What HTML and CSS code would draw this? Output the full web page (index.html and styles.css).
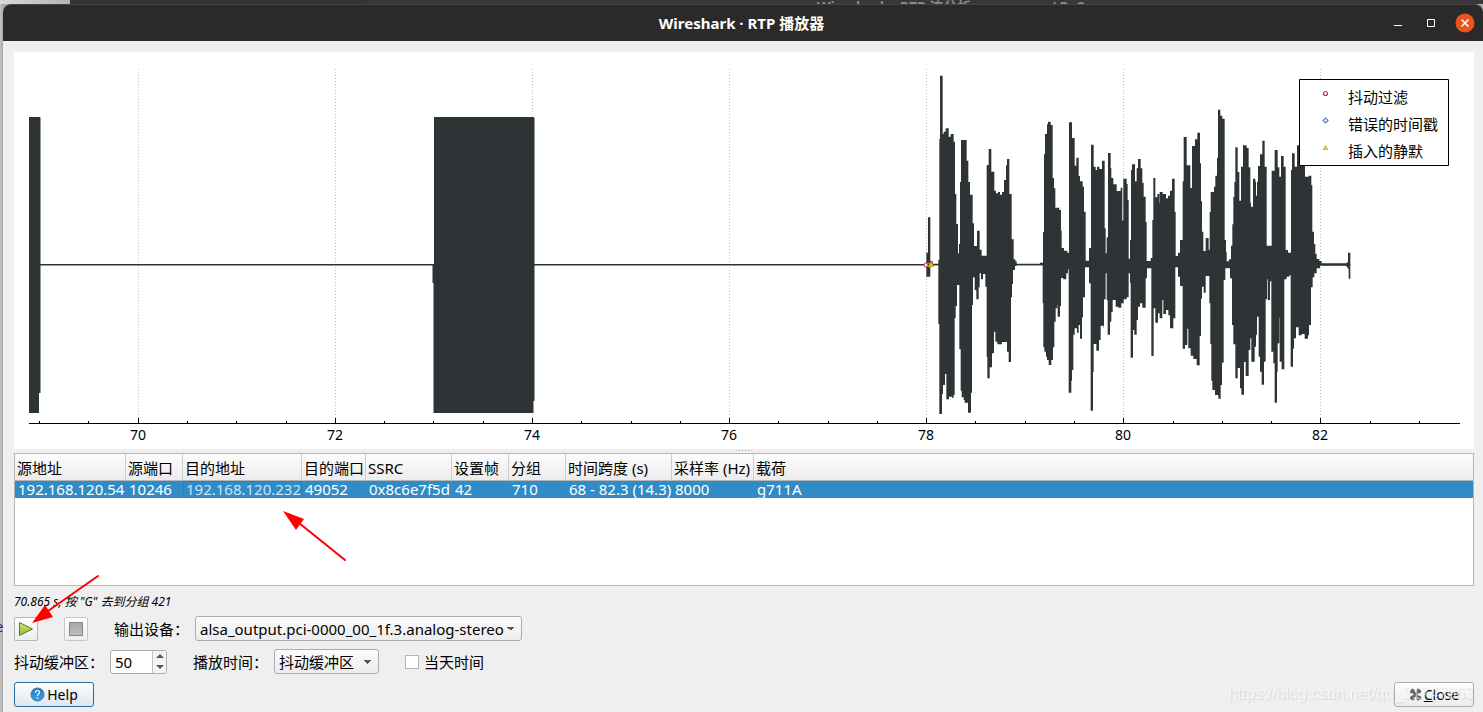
FILE: index.html
```html
<!DOCTYPE html>
<html lang="zh-CN">
<head>
<meta charset="utf-8">
<title>Wireshark · RTP 播放器</title>
<link rel="stylesheet" href="styles.css">
</head>
<body>
<div class="desktop">
  <div class="backdrop"><span class="backdrop-title">Wireshark · RTP 流分析 · ppp.pcap / Re2</span></div>
  <span class="backdrop-letter">e</span>
  <main class="window">
    <header class="titlebar">
      <h1 class="title">Wireshark · RTP 播放器</h1>
      <div class="window-buttons">
        <button class="window-button" aria-label="Minimize"><svg width="18" height="18" viewBox="0 0 18 18"><path d="M5 11.500h8" stroke="#fff"/></svg></button>
        <button class="window-button" aria-label="Maximize"><svg width="18" height="18" viewBox="0 0 18 18"><path d="M5.500 5.500h7v7h-7z" fill="none" stroke="#fff"/></svg></button>
        <button class="window-button" aria-label="Close window"><svg width="20" height="20" viewBox="0 0 20 20"><circle cx="10" cy="10" r="9.500" fill="#e95420"/><path d="M6.500 6.500l7 7m0-7l-7 7" stroke="#fff" stroke-width="1.500"/></svg></button>
      </div>
    </header>
    <div class="content">
      <svg class="plot" viewBox="14 52 1460 397" role="img" aria-label="RTP waveform">
        <g stroke="#c0c0c0" stroke-dasharray="1 2">
          <path d="M138.500 69V418M335.500 69V418M532.500 69V418M729.500 69V418M926.500 69V418M1123.500 69V418M1320.500 69V418"/>
        </g>
        <path d="M29 423.500H1460" stroke="#000"/>
        <path d="M138.500 418v5M335.500 418v5M532.500 418v5M729.500 418v5M926.500 418v5M1123.500 418v5M1320.500 418v5M39.500 421v2M88.500 421v2M187.500 421v2M236.500 421v2M286.500 421v2M384.500 421v2M433.500 421v2M483.500 421v2M581.500 421v2M631.500 421v2M680.500 421v2M778.500 421v2M828.500 421v2M877.500 421v2M975.500 421v2M1025.500 421v2M1074.500 421v2M1173.500 421v2M1222.500 421v2M1271.500 421v2M1370.500 421v2M1419.500 421v2" stroke="#000"/>
        <g class="axis-labels">
          <text x="138" y="440">70</text><text x="335" y="440">72</text><text x="532" y="440">74</text><text x="729" y="440">76</text><text x="926" y="440">78</text><text x="1123" y="440">80</text><text x="1320" y="440">82</text>
        </g>
        <g fill="#2e3436">
          <path d="M29 117H40L40.500 118V264H434V117H534V118H534.500V264H925V265.500H534.500V401H533.500V413H433.500V283H432.500V265.500H40.500V393H39V413H29z"/>
          <g transform="translate(910 60) scale(.333333)">
            <path d="M49 612V578H54V472H61V604H68V611H85V600H88V237H90V47H98V222H101V215H107V205H116V230H122V222H131V245H135V402H139V492H144V580H147V552H150V366H153V240H170V302H175V366H180V404H188V490H192V558H201V512H209V569H215V587H230V315H236V267H244V335H253V392H258V400H264V396H270V404H276V396H282V360H288V316H291V297H298V402H305V538H311V598H316V604H320V611H390V608H399V516H402V283H405V222H411V193H414V185H422V195H428V354H432V385H436V443H448V450H453V512H455V564H462V572H472V578H477V187H486V234H494V317H499V293H506V348H510V364H518V380H522V455H527V602H537V564H543V254H551V320H557V330H561V320H568V327H576V302H584V505H587V580H590V532H594V279H602V325H604V354H610V373H620V393H632V383H637V482H640V356H650V372H653V420H656V614H590V616H49z"/>
            <path d="M49 612V650H61V616H85V792H88V1062H96V1002H99V975H105V942H109V1018H117V1010H126V1013H131V1005H134V775H137V738H141V675H148V868H152V992H155V1012H161V1020H164V1028H174V1058H183V998H186V735H189V652H194V690H199V718H206V682H209V640H213V658H219V642H226V680H230V890H232V955H239V922H246V880H252V815H256V845H262V853H276V846H291V875H296V906H303V712H306V672H309V630H315V618H320V616H398V730H400V862H403V875H408V890H411V900H416V915H424V900H429V862H433V785H437V745H442V735H443V770H450V738H453V654H460V658H469V640H474V628H476V998H484V962H486V930H490V824H494V805H501V818H506V795H510V836H516V772H519V712H525V622H537V670H542V1052H549V936H551V852H559V872H567V840H572V797H581V803H582V718H587V640H590V720H593V824H600V785H604V756H608V720H617V740H625V743H634V730H641V718H650V712H656V612z"/>
            <g transform="translate(600 0)">
              <path d="M54 614V596H60V540H63V330H66V313H75V364H80V325H84V297H92V325H97V368H101V410H107V486H110V603H122V594H127V480H130V354H136V412H142V402H148V430H149V396H158V402H168V415H174V407H180V392H186V356H194V455H197V588H204V578H210V540H218V364H221V231H230V316H241V384H246V258H255V238H262V218H270V310H273V424H276V515H280V573H287V534H296V569H299V456H302V396H312V380H316V347H321V293H324V149H331V167H337V176H344V540H348V575H350V604H357V598H363V557H367V493H370V410H373V366H376V262H383V336H388V422H393V320H399V256H410V264H416V322H421V428H423V440H429V356H436V365H438V407H441V365H444V318H450V283H457V242H464V320H470V557H485V332H494V270H503V322H508V350H513V288H521V320H527V570H534V578H543V330H546V280H554V320H561V256H570V316H585V350H596V347H604V376H607V515H612V552H616V582H620V597H628V603H635V610H708L714 606V578H721V616H54z"/>
              <path d="M54 612V640H60V668H62V893H69V810H73V824H80V780H84V740H90V730H97V743H107V655H111V625H124V888H131V745H136V788H144V760H149V775H157V720H160V762H168V750H175V766H180V805H190V775H196V622H204V650H210V678H218V866H225V855H232V806H235V865H242V887H250V897H260V916H269V828H273V716H276V680H281V698H287V648H298V730H301V852H304V962H307V990H315V1005H325V1016H332V975H336V908H341V660H346V625H360V655H366V795H370V853H376V955H383V924H390V985H394V1004H402V906H407V948H416V870H421V835H424V905H434V860H438V824H441V770H446V890H450V935H455V974H462V905H467V718H472V658H474V720H480V664H484V875H490V910H494V1028H501V935H503V850H508V773H509V905H515V928H523V658H530V650H538V646H542V920H549V866H552V835H558V802H566V826H575V822H584V836H594V826H597V795H603V682H608V652H613V640H620V625H630V617H708L716 628V656H721V612z"/>
            </g>
          </g>
        </g>
        <g fill="#fff">
          <circle cx="926" cy="265" r="2" stroke="#c4333b"/>
          <circle cx="929" cy="265" r="2" stroke="#e07b2a" fill="none"/>
          <path d="M931 262l2.500 4.500h-5z" fill="#d9c04a" stroke="#c4a000"/>
        </g>
        <path d="M1299.500 79.500h149v86h-149z" fill="#fff" stroke="#000"/>
        <circle cx="1325.500" cy="93.500" r="2" fill="#fff" stroke="#c03a45" stroke-width="1.200"/>
        <path d="M1325.500 118l2.500 2.500-2.500 2.500-2.500-2.500z" fill="#fff" stroke="#5f82b5" stroke-width="1.200"/>
        <path d="M1325.500 145.500l2.200 4h-4.400z" fill="#f0dc70" stroke="#cdb02a"/>
        <g class="legend-labels">
          <text x="1348" y="103">抖动过滤</text>
          <text x="1348" y="130">错误的时间戳</text>
          <text x="1348" y="157">插入的静默</text>
        </g>
      </svg>
      <div class="splitter"></div>
      <section class="streams">
        <table class="stream-table">
          <colgroup><col class="c-addr"><col class="c-port"><col class="c-dest"><col class="c-dport"><col class="c-ssrc"><col class="c-port"><col class="c-port"><col class="c-span"><col class="c-rate"><col></colgroup>
          <thead><tr><th>源地址</th><th>源端口</th><th>目的地址</th><th>目的端口</th><th>SSRC</th><th>设置帧</th><th>分组</th><th>时间跨度 (s)</th><th>采样率 (Hz)</th><th>载荷</th></tr></thead>
          <tbody><tr><td>192.168.120.54</td><td>10246</td><td class="current">192.168.120.232</td><td>49052</td><td>0x8c6e7f5d</td><td>42</td><td>710</td><td>68 - 82.3 (14.3)</td><td>8000</td><td>g711A</td></tr></tbody>
        </table>
        <svg class="arrow arrow-dest" width="66" height="54" viewBox="281 509 66 54"><path d="M299 523l46 37" stroke="#f00" stroke-width="2" stroke-linecap="round"/><path d="M283 511l21 8-8 11z" fill="#f00"/></svg>
      </section>
      <p class="status">70.865 s, 按 "G" 去到分组 421</p>
      <div class="row output-row">
        <button class="tool" aria-label="Play"><svg width="18" height="18" viewBox="0 0 18 18"><defs><linearGradient id="play" x2="0" y2="1"><stop stop-color="#d5e58b"/><stop offset="1" stop-color="#8db82c"/></linearGradient></defs><path d="M2.500 2.500v13l13-6.500z" fill="url(#play)" stroke="#587d16" stroke-linejoin="round"/></svg></button>
        <button class="tool stop" aria-label="Stop"><svg width="18" height="18" viewBox="0 0 18 18"><defs><linearGradient id="stop" x2="0" y2="1"><stop stop-color="#a8a8a8"/><stop offset="1" stop-color="#bdbdbd"/></linearGradient></defs><path d="M2.500 2.500h13v13h-13z" fill="url(#stop)" stroke="#858585"/></svg></button>
        <label class="output-label" for="device">输出设备：</label>
        <select id="device" class="combo device"><option>alsa_output.pci-0000_00_1f.3.analog-stereo</option></select>
        <svg class="arrow arrow-play" width="70" height="52" viewBox="30 573 70 52"><path d="M48 611l50-35" stroke="#f00" stroke-width="2" stroke-linecap="round"/><path d="M32 623l13-18 8 12z" fill="#f00"/></svg>
      </div>
      <div class="row">
        <label class="jitter-label" for="jitter">抖动缓冲区：</label>
        <span class="spin"><input id="jitter" type="text" value="50"><span class="spin-buttons"><button aria-label="Increase"><svg width="8" height="4" viewBox="0 0 8 4"><path d="M0 4l4-4 4 4z" fill="#555"/></svg></button><button aria-label="Decrease"><svg width="8" height="4" viewBox="0 0 8 4"><path d="M0 0l4 4 4-4z" fill="#555"/></svg></button></span></span>
        <label class="timing-label" for="timing">播放时间：</label>
        <select id="timing" class="combo timing"><option>抖动缓冲区</option></select>
        <label class="day"><input type="checkbox">当天时间</label>
      </div>
      <footer class="row footer">
        <button class="action help"><svg width="15" height="15" viewBox="0 0 15 15"><defs><linearGradient id="help" x2="0" y2="1"><stop stop-color="#2a7ac0"/><stop offset="1" stop-color="#3ba1e6"/></linearGradient></defs><circle cx="7.500" cy="7.500" r="6.500" fill="url(#help)" stroke="#3a78ad"/><path d="M5.500 6q0-2.500 2-2.500t2 2q0 1-1 1.500t-1 2" fill="none" stroke="#fff" stroke-width="1.200"/><circle cx="7.500" cy="11" r=".8" fill="#fff"/></svg>Help</button>
        <button class="action close"><svg width="13" height="13" viewBox="0 0 13 13"><path d="M3.500 1l1.500.5.500 2.500 1 1 1-1L8 1.500 9.500 1l2.500 2-.5 1.500-2.500.5-1 1.500 1 1.500 2.500.5.5 1.500-2.500 2L8 11.500 7.500 9l-1-1-1 1-.5 2.500-1.500.5L1 10l.5-1.500L4 8l1-1.500L4 5l-2.500-.5L1 3z" fill="#6a6a6a" stroke="#4a4a4a" stroke-width=".7"/></svg><span><u>C</u>lose</span></button>
        <span class="watermark">https://blog.csdn.net/qq_31747063</span>
      </footer>
    </div>
  </main>
</div>
</body>
</html>
```
FILE: styles.css
```css
* { box-sizing: border-box; }
body {
  margin: 0;
  font: 15px/20px "Noto Sans", "Noto Sans CJK SC", sans-serif;
  color: #000;
}
button, input, select { font: inherit; color: inherit; }
svg { display: block; flex: none; }
.desktop {
  position: relative;
  display: flex;
  flex-direction: column;
  min-height: 100vh;
  padding-left: 3px;
  background: linear-gradient(to right, #c4c4c4, #a9a9a9 3px);
  overflow: hidden;
}
.backdrop {
  height: 4px;
  margin-left: -3px;
  padding-left: 817px;
  overflow: hidden;
  background: linear-gradient(to right, #d8d8d8, #b4b4b4 70px, #343233 70px, #343233 366px, #383637 366px);
}
.backdrop-title {
  display: block;
  margin-top: -3px;
  line-height: 20px;
  font-size: 14px;
  font-weight: 700;
  color: #8a8a8a;
}
.backdrop-letter {
  position: absolute;
  left: -5px;
  top: 616px;
  color: #3b1a78;
}
.window {
  position: relative;
  flex: 1;
  display: flex;
  flex-direction: column;
  background: #efefef;
  border-radius: 8px 8px 0 0;
}
.titlebar {
  display: flex;
  align-items: center;
  height: 37px;
  padding-right: 8px;
  background: #2c292a;
  border-top: 1px solid #454344;
  border-radius: 8px 8px 0 0;
}
.title {
  flex: 1;
  margin: 0 0 0 91px;
  text-align: center;
  font-size: 15px;
  color: #fff;
}
.window-buttons { display: flex; align-items: center; gap: 15px; }
.window-button { display: flex; padding: 0; border: 0; background: none; }
.content {
  flex: 1;
  display: flex;
  flex-direction: column;
  padding: 11px 9px 5px 11px;
}
.plot { width: 100%; background: #fff; }
.axis-labels { font-size: 14px; text-anchor: middle; }
.legend-labels { font-size: 15px; }
.splitter {
  width: 17px;
  height: 1px;
  margin: 1px auto 2px;
  background: repeating-linear-gradient(to right, #aaa 0 1px, #efefef 1px 3px);
}
.streams {
  position: relative;
  flex: 1;
  border: 1px solid #b5b5b5;
  background: #fff;
}
.stream-table {
  width: 100%;
  table-layout: fixed;
  border-collapse: separate;
  border-spacing: 0;
  white-space: nowrap;
}
.c-addr { width: 111px; }
.c-port { width: 57px; }
.c-dest { width: 119px; }
.c-dport { width: 64px; }
.c-ssrc { width: 86px; }
.c-span { width: 106px; }
.c-rate { width: 82px; }
.stream-table th {
  height: 27px;
  padding: 2px 0 0 2px;
  text-align: left;
  font-weight: 400;
  border-right: 1px solid #cdcdcd;
  border-bottom: 1px solid #b5b5b5;
  background: linear-gradient(#fcfcfc, #ececec);
}
.stream-table th:last-child { border-right: 0; }
.stream-table td {
  height: 17px;
  padding: 0 0 0 3px;
  line-height: 17px;
  color: #fff;
  background: #308cc6;
}
.stream-table .current { color: #c9e4f5; box-shadow: inset 0 0 0 1px #2a7fb5; }
.arrow { position: absolute; pointer-events: none; }
.arrow-dest { left: 266px; top: 55px; }
.arrow-play { left: 16px; top: -43px; }
.status {
  margin: 7px 0 5px;
  font-size: 12px;
  line-height: 18px;
  font-style: italic;
}
.row { position: relative; display: flex; align-items: center; height: 25px; margin-bottom: 8px; }
.tool {
  display: flex;
  align-items: center;
  justify-content: center;
  width: 24px;
  height: 24px;
  padding: 0;
  border: 1px solid #b5b5b5;
  border-radius: 2px;
  background: linear-gradient(#fff, #ededed);
}
.stop { margin-left: 26px; border-color: #c8c8c8; }
.output-label { width: 81px; margin-left: 26px; }
.combo {
  height: 25px;
  padding: 0 4px;
  border: 1px solid #acacac;
  border-radius: 3px;
  appearance: none;
  background:
    linear-gradient(45deg, transparent 50%, #555 50%) right 10px top 10px / 4px 4px no-repeat,
    linear-gradient(315deg, transparent 50%, #555 50%) right 6px top 10px / 4px 4px no-repeat,
    linear-gradient(#fcfcfc, #ececec);
}
.device { width: 327px; }
.timing { width: 105px; }
.jitter-label { width: 96px; }
.spin {
  display: flex;
  width: 57px;
  height: 24px;
  border: 1px solid #acacac;
  border-radius: 3px;
  background: #fff;
  overflow: hidden;
}
.spin input { width: 41px; padding: 0 4px; border: 0; background: none; }
.spin-buttons { display: flex; flex: 1; flex-direction: column; border-left: 1px solid #c0c0c0; background: #f4f4f4; }
.spin-buttons button { display: flex; flex: 1; align-items: center; justify-content: center; padding: 0; border: 0; background: none; }
.timing-label { width: 81px; margin-left: 26px; }
.day { display: flex; align-items: center; gap: 5px; margin-left: 26px; }
.day input { width: 14px; height: 14px; margin: 0; appearance: none; border: 1px solid #b5b5b5; background: #fff; }
.footer { justify-content: space-between; margin-bottom: 0; }
.action {
  display: flex;
  align-items: center;
  justify-content: center;
  gap: 2px;
  width: 80px;
  height: 25px;
  padding: 0;
  font-size: 14px;
  border: 1px solid #acacac;
  border-radius: 3px;
  background: linear-gradient(#fefefe, #ececec);
}
.help { border-color: #2a6d9c; background: linear-gradient(#fcfdfe, #dce7ee); }
.watermark {
  position: absolute;
  right: 0;
  top: 2px;
  font: 16px/20px "Liberation Sans", sans-serif;
  color: rgba(255, 255, 255, .6);
  text-shadow: 1px 1px 1px rgba(0, 0, 0, .1);
  pointer-events: none;
}
```
